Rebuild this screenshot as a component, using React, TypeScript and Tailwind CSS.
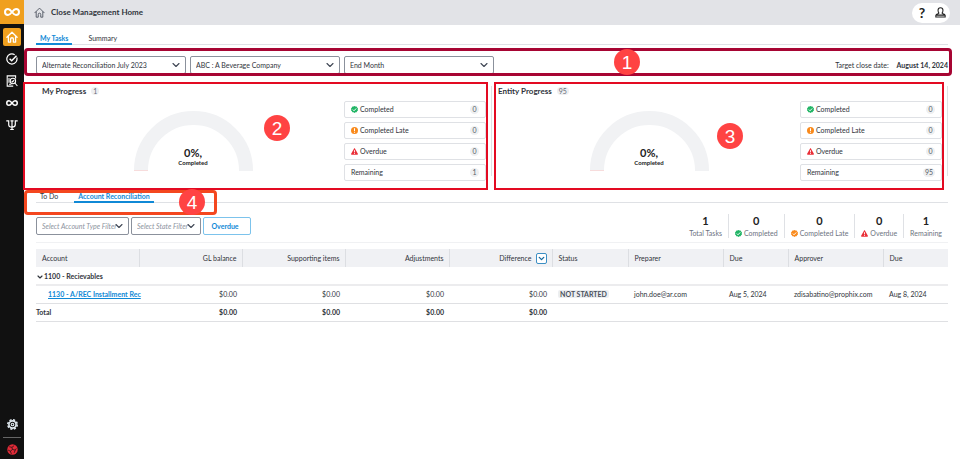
import { ReactNode } from "react";
import { ChevronDown } from "lucide-react";

function InfinityMark({ className, width = 3 }: { className: string; width?: number }) {
  return (
    <svg viewBox="0 0 32 18" className={className} fill="none" stroke="currentColor" strokeWidth={width} strokeLinecap="round" aria-hidden="true">
      <path d="M16 9C12.500 4.500 10.500 3 8 3a6 6 0 0 0 0 12c2.500 0 4.500-1.500 8-6s5.500-6 8-6a6 6 0 0 1 0 12c-2.500 0-4.500-1.500-8-6z" />
    </svg>
  );
}

function HouseMark({ className, width = 2 }: { className: string; width?: number }) {
  return (
    <svg viewBox="0 0 20 20" className={className} fill="none" stroke="currentColor" strokeWidth={width} strokeLinecap="round" strokeLinejoin="round" aria-hidden="true">
      <path d="M1.500 10.500L10 2l8.500 8.500M4 9v9.500h3.700v-5a2.300 2.300 0 0 1 4.600 0v5H16V9" />
    </svg>
  );
}

function CheckBadge({ className }: { className: string }) {
  return (
    <svg viewBox="0 0 16 16" className={`size-[7px] shrink-0 ${className}`} aria-hidden="true">
      <path fill="currentColor" d="M8 0l2.200 1.300 2.600-.1 1.100 2.300 2 1.600-.5 2.500.5 2.600-2 1.600-1.100 2.300-2.600-.1L8 16l-2.200-2-2.600.1-1.100-2.300-2-1.600.5-2.600L.1 5.100l2-1.600 1.100-2.300 2.600.1z" />
      <path fill="none" stroke="#fff" strokeWidth="2.200" d="M4.200 8.200l2.700 2.700 5-5.300" />
    </svg>
  );
}

function LateBadge() {
  return (
    <svg viewBox="0 0 16 16" className="size-[7px] shrink-0 text-[#f98a1c]" aria-hidden="true">
      <circle cx="8" cy="8" r="8" fill="currentColor" />
      <path stroke="#fff" strokeWidth="2.400" d="M8 3v6M8 10.800v2.400" />
    </svg>
  );
}

function OverdueBadge() {
  return (
    <svg viewBox="0 0 16 16" className="size-[7px] shrink-0 text-[#ea2f38]" aria-hidden="true">
      <path fill="currentColor" d="M8 .8c.6 0 1 .3 1.300.8l6.400 11.500c.6 1.100-.1 2.300-1.300 2.300H1.600c-1.200 0-1.900-1.200-1.300-2.300L6.700 1.600C7 1.100 7.400.8 8 .8z" />
      <path stroke="#fff" strokeWidth="2" d="M8 5v5M8 11.500v2" />
    </svg>
  );
}

function Marker({ label, className }: { label: string; className: string }) {
  return (
    <span className={`absolute z-20 flex size-[26px] items-center justify-center rounded-full bg-[#ff4343] font-['Liberation_Sans',sans-serif] text-[19px] leading-none text-white ${className}`}>
      {label}
    </span>
  );
}

function NavButton({ label, active, children }: { label: string; active?: boolean; children: ReactNode }) {
  return (
    <button aria-label={label} className={`flex h-[18px] w-[18px] items-center justify-center rounded-xs text-white ${active ? "bg-[#f0a01f]" : ""}`}>
      {children}
    </button>
  );
}

function Sidebar() {
  return (
    <nav aria-label="Main" className="flex w-6 shrink-0 flex-col items-center bg-[#111111]">
      <div className="flex h-6 w-full items-center justify-center bg-[#f0a01f] text-white">
        <InfinityMark className="h-[10px] w-4" width={4} />
      </div>
      <div className="mt-1 flex flex-col gap-1">
        <NavButton label="Home" active>
          <HouseMark className="size-3" width={2.2} />
        </NavButton>
        <NavButton label="Tasks">
          <svg viewBox="0 0 20 20" className="size-3" fill="none" stroke="currentColor" strokeWidth="2" aria-hidden="true">
            <path d="M18 7.500A8.500 8.500 0 1 1 14.500 2.800" />
            <path d="M6 9.500l3.500 3.500 8-8.500" strokeWidth="2.400" />
          </svg>
        </NavButton>
        <NavButton label="Review">
          <svg viewBox="0 0 20 20" className="size-3" fill="none" stroke="currentColor" strokeWidth="1.800" aria-hidden="true">
            <path d="M16 6V1.500H2v17h10M5 15.500h4M5 5v8" />
            <circle cx="11.500" cy="10" r="4.500" />
            <path d="M14.800 13.300l4.200 5M9.500 10l1.500 1.500 2.500-3" />
          </svg>
        </NavButton>
        <NavButton label="Reconciliation">
          <InfinityMark className="h-2 w-3" width={4} />
        </NavButton>
        <NavButton label="Consolidation">
          <svg viewBox="0 0 20 20" className="size-3" fill="none" stroke="currentColor" strokeWidth="2" aria-hidden="true">
            <path d="M10 2v16M7 17.500h6M.5 3h4v6c0 3 1.500 4.500 5.500 4.500s5.500-1.500 5.500-4.500V3h4M7.500 3h5" />
          </svg>
        </NavButton>
      </div>
      <div className="mt-auto flex flex-col items-center pb-[3px]">
        <button aria-label="Settings" className="flex size-[18px] items-center justify-center text-[#dfe8ee]">
          <svg viewBox="0 0 20 20" className="size-[11px]" fill="none" stroke="currentColor" aria-hidden="true">
            <circle cx="10" cy="10" r="6.500" strokeWidth="3" />
            <circle cx="10" cy="10" r="2.400" strokeWidth="2" />
            <circle cx="10" cy="10" r="8.600" strokeWidth="2.800" strokeDasharray="3.900 2.854" />
          </svg>
        </button>
        <span className="my-1 h-px w-[18px] bg-[#666666]" />
        <button aria-label="Apps" className="flex size-[14px] items-center justify-center text-[#e22b38]">
          <svg viewBox="0 0 20 20" className="size-[11px]" aria-hidden="true">
            <circle cx="10" cy="10" r="9.500" fill="currentColor" />
            <path fill="none" stroke="#111" strokeWidth="1.300" d="M4 5l5 1 1 4-4 3M9 6l4-3M10 10l5 1 2-3M15 11l-2 5M6 13l2 5M6 13l-4-2" />
          </svg>
        </button>
      </div>
    </nav>
  );
}

function Header() {
  return (
    <header className="flex h-[25px] items-center bg-[#e2e3e7] px-[10px]">
      <HouseMark className="size-[11px] text-[#4a505c]" width={1.6} />
      <h1 className="ml-[6px] text-[8px] font-bold text-[#30343b]">Close Management Home</h1>
      <div className="ml-auto flex h-5 items-center gap-2 rounded-full bg-white pr-1 pl-[5px] text-[#222]">
        <button aria-label="Help" className="w-[10px] text-center text-[14px] leading-none font-bold">?</button>
        <button aria-label="Account">
          <svg viewBox="0 0 20 20" className="size-[11px]" fill="none" stroke="currentColor" strokeWidth="1.900" aria-hidden="true">
            <path d="M7.500 11.500C6 10 5.500 8 5.500 6a4.500 4.500 0 0 1 9 0c0 2-.5 4-2 5.500M7.500 11.500c-1.500 1-5.500.5-6 3.500v3h17v-3c-.5-3-4.500-2.500-6-3.500M2 14.800h16" />
          </svg>
        </button>
      </div>
    </header>
  );
}

function Dropdown({ label, value, className, placeholder }: { label: string; value: string; className: string; placeholder?: boolean }) {
  return (
    <div className={`relative ${className}`}>
      <select
        aria-label={label}
        className={`h-[18px] w-full appearance-none rounded-xs border border-[#8b919c] bg-white pl-[5px] text-[7px] ${placeholder ? "text-[#8d93a0] italic" : "text-[#30343b]"}`}
      >
        <option>{value}</option>
      </select>
      <ChevronDown className="pointer-events-none absolute top-[3px] right-1 size-3 text-[#3f4654]" strokeWidth={2.2} />
    </div>
  );
}

function Stat({ icon, label, count }: { icon?: ReactNode; label: string; count: number }) {
  return (
    <button className="flex h-[17px] w-full shrink-0 items-center gap-[2px] rounded-xs border border-[#dfe1e5] bg-white px-[6px] text-[7px] text-[#30343b]">
      {icon}
      <span>{label}</span>
      <span className="ml-auto flex h-[9px] min-w-[9px] items-center justify-center rounded-full bg-[#eeeff1] px-[2px] text-[7px] text-[#555b66]">{count}</span>
    </button>
  );
}

function ProgressPanel({ title, total, remaining, frame, marker }: { title: string; total: number; remaining: number; frame: string; marker: ReactNode }) {
  return (
    <section className="relative pt-1 pb-[14px]">
      <div className="flex h-[90px] border-r border-[#dfe1e5] pr-[5px]">
        <div className="flex flex-1 flex-col pl-[6px]">
          <div className="flex h-[10px] items-center gap-[5px]">
            <h2 className="text-[8px] font-bold text-[#30343b]">{title}</h2>
            <span className="flex h-2 min-w-2 items-center justify-center rounded-full bg-[#eeeff1] px-[2px] text-[7px] text-[#666c78]">{total}</span>
          </div>
          <div className="relative mt-[15px] flex justify-center">
            <svg viewBox="0 0 119 60" className="h-[60px] w-[119px]" role="img" aria-label={`${title}: 0% completed`}>
              <path d="M7 60v-.5a52.500 52.500 0 0 1 105 0v.5" fill="none" stroke="#f1f2f4" strokeWidth="14" />
              <path d="M0 59.500h14" stroke="#f7dcdc" strokeWidth="1" />
            </svg>
            <p className="absolute inset-x-0 bottom-1 text-center text-[#222]">
              <span className="block text-[11px] leading-[12px] font-bold">0%,</span>
              <span className="block text-[6px] leading-[8px] font-bold">Completed</span>
            </p>
          </div>
        </div>
        <div className="flex w-[142px] flex-col gap-1 pt-[15px]">
          <Stat icon={<CheckBadge className="text-[#22b566]" />} label="Completed" count={0} />
          <Stat icon={<LateBadge />} label="Completed Late" count={0} />
          <Stat icon={<OverdueBadge />} label="Overdue" count={0} />
          <Stat label="Remaining" count={remaining} />
        </div>
      </div>
      <div className={`pointer-events-none absolute inset-y-0 right-1 z-10 border-2 border-[#e30a22] ${frame}`} />
      {marker}
    </section>
  );
}

function Summary({ value, label, icon }: { value: number; label: string; icon?: ReactNode }) {
  return (
    <div className="flex h-6 flex-col items-center justify-between px-[6px]">
      <span className="text-[11px] leading-[14px] font-bold text-[#222]">{value}</span>
      <span className="flex items-center gap-[2px] text-[7px] leading-[9px] text-[#6d7380]">
        {icon}
        {label}
      </span>
    </div>
  );
}

const columns = [
  { label: "Account", width: "w-[103px]", right: false },
  { label: "GL balance", width: "w-[103px]", right: true },
  { label: "Supporting items", width: "w-[103px]", right: true },
  { label: "Adjustments", width: "w-[104px]", right: true },
  { label: "Difference", width: "w-[103px]", right: true },
  { label: "Status", width: "w-[76px]", right: false },
  { label: "Preparer", width: "w-[95px]", right: false },
  { label: "Due", width: "w-[65px]", right: false },
  { label: "Approver", width: "w-[95px]", right: false },
  { label: "Due", width: "w-[65px]", right: false },
];

function ReconciliationTable() {
  const amounts = ["gl", "supporting", "adjustments", "difference"];
  return (
    <table className="mt-[6px] w-full table-fixed border-collapse text-left text-[7px] text-[#30343b]">
      <thead>
        <tr className="h-[18px] bg-[#f0f1f4]">
          {columns.map((column, index) => (
            <th key={index} scope="col" className={`pr-[5px] pl-[6px] font-normal ${column.width} ${column.right ? "text-right" : ""} ${index < 9 ? "border-r border-[#dcdee2]" : ""}`}>
              {column.label === "Difference" ? (
                <span className="flex items-center justify-end gap-1">
                  Difference
                  <button aria-label="Difference options" className="flex size-[11px] items-center justify-center rounded-xs border border-[#3c8fc4] bg-white text-[#14689f]">
                    <ChevronDown className="size-[9px] shrink-0" strokeWidth={3.5} />
                  </button>
                </span>
              ) : (
                column.label
              )}
            </th>
          ))}
        </tr>
      </thead>
      <tbody>
        <tr className="h-[18px] border-b-2 border-[#ececee]">
          <td colSpan={10} className="pt-[2px] font-bold">
            <button className="flex items-center">
              <ChevronDown className="size-2" strokeWidth={3.5} />
              1100 - Recievables
            </button>
          </td>
        </tr>
        <tr className="h-[18px] border-b border-[#dfe0e3]">
          <td className="pl-3 font-bold whitespace-nowrap">
            <a href="#account-1130" className="text-[#1089d6] underline">1130 - A/REC Installment Rec</a>
          </td>
          {amounts.map((name) => (
            <td key={name} className="pr-[5px] text-right">$0.00</td>
          ))}
          <td className="pl-[6px]">
            <span className="rounded-xs bg-[#eceef1] px-[2px] font-bold text-[#4a505c]">NOT STARTED</span>
          </td>
          <td className="pl-[6px]">john.doe@ar.com</td>
          <td className="pl-[6px]">Aug 5, 2024</td>
          <td className="pl-[6px]">zdisabatino@prophix.com</td>
          <td className="pl-[6px]">Aug 8, 2024</td>
        </tr>
        <tr className="h-[18px] border-b border-[#dfe0e3] font-bold">
          <td>Total</td>
          {amounts.map((name) => (
            <td key={name} className="pr-[5px] text-right">$0.00</td>
          ))}
          <td colSpan={5} />
        </tr>
      </tbody>
    </table>
  );
}

const tabOn = "relative h-full px-1 font-bold text-[#1089d6] after:absolute after:inset-x-0 after:-bottom-px after:h-[2px] after:bg-[#1089d6]";
const tabOff = "h-full px-1 text-[#30343b]";

export default function App() {
  return (
    <div className="flex min-h-screen overflow-hidden bg-white font-[Lato,sans-serif] leading-[9px]">
      <Sidebar />
      <div className="min-w-0 flex-1">
        <Header />
        <main className="px-3">
          <div role="tablist" aria-label="Views" className="mt-[7px] flex h-[13px] gap-3 border-b border-[#dfe1e5] text-[7px]">
            <button role="tab" aria-selected="true" className={tabOn}>My Tasks</button>
            <button role="tab" aria-selected="false" className={tabOff}>Summary</button>
          </div>

          <div className="relative mt-[3px] flex h-7 items-center gap-1 pt-[6px]">
            <Dropdown label="Checklist" value="Alternate Reconciliation July 2023" className="w-[150px]" />
            <Dropdown label="Entity" value="ABC : A Beverage Company" className="w-[150px]" />
            <Dropdown label="Period" value="End Month" className="w-[150px]" />
            <p className="ml-auto text-[7px] text-[#30343b]">
              Target close date: <strong className="ml-[6px]">August 14, 2024</strong>
            </p>
            <div className="pointer-events-none absolute inset-y-0 -right-1 -left-3 z-10 rounded-sm border-3 border-[#a70533]" />
            <Marker label="1" className="top-[1px] left-[578px]" />
          </div>

          <div className="mt-[6px] grid grid-cols-2">
            <ProgressPanel title="My Progress" total={1} remaining={1} frame="-left-[13px]" marker={<Marker label="2" className="top-[33px] left-[228px]" />} />
            <ProgressPanel title="Entity Progress" total={95} remaining={95} frame="left-[2px]" marker={<Marker label="3" className="top-[41px] left-[225px]" />} />
          </div>

          <div className="relative h-[25px]">
            <div role="tablist" aria-label="Task type" className="flex h-[13px] gap-3 border-b border-[#dfe1e5] text-[7px]">
              <button role="tab" aria-selected="false" className={tabOff}>To Do</button>
              <button role="tab" aria-selected="true" className={tabOn}>Account Reconciliation</button>
            </div>
            <div className="pointer-events-none absolute inset-y-0 -left-3 z-10 w-[193px] rounded-sm border-3 border-[#f4471f]" />
            <Marker label="4" className="-top-[1px] left-[143px]" />
          </div>

          <div className="flex h-7 items-start gap-[2px] border-b border-[#f0f1f3] pt-[2px]">
            <Dropdown label="Account type" value="Select Account Type Filter" placeholder className="w-[93px]" />
            <Dropdown label="State" value="Select State Filter" placeholder className="w-[70px]" />
            <button className="h-[18px] w-12 rounded-xs border border-[#7cc3ec] pr-1 text-[7px] font-bold text-[#1089d6]">Overdue</button>
            <div className="-mt-[3px] ml-auto flex divide-x divide-[#dfe1e5]">
              <Summary value={1} label="Total Tasks" />
              <Summary value={0} label="Completed" icon={<CheckBadge className="text-[#22b566]" />} />
              <Summary value={0} label="Completed Late" icon={<CheckBadge className="text-[#f98a1c]" />} />
              <Summary value={0} label="Overdue" icon={<OverdueBadge />} />
              <Summary value={1} label="Remaining" />
            </div>
          </div>

          <ReconciliationTable />
        </main>
      </div>
    </div>
  );
}
